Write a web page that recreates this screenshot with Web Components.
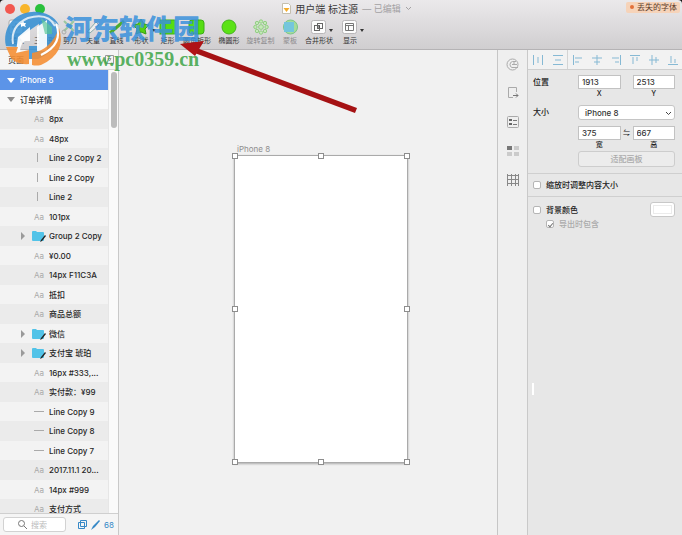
<!DOCTYPE html>
<html lang="zh-CN">
<head>
<meta charset="utf-8">
<title>用户端 标注源</title>
<style>
html,body{height:100%;margin:0}
body{font:8px/12px Inter,"Noto Sans CJK SC",sans-serif;color:#222;background:#111;overflow:hidden}
</style>
</head>
<body>
<sk-app></sk-app>
<script>
function define(name, html, setup) {
  customElements.define(name, class extends HTMLElement {
    constructor() {
      super();
      const t = document.createElement('template');
      t.innerHTML = '<style>*{box-sizing:border-box}</style>' + html;
      this.attachShadow({mode: 'open'}).append(t.content.cloneNode(true));
    }
    connectedCallback() { if (setup) setup(this, this.shadowRoot); }
  });
}

const toolIcons = {
  plus: '<svg width="20" height="18"><rect x="2" y="2" width="14" height="14" rx="2" fill="#fafafa" stroke="#aaa"/><path d="M9 5v8M5 9h8" stroke="#777"/></svg>',
  tri: '<svg width="20" height="18"><path d="M10 2l8 14H2z" fill="#7ed24a" opacity=".8"/></svg>',
  cut: '<svg width="20" height="18"><path d="M4 3l10 10M14 3L4 13" stroke="#9bc7a0" stroke-width="2"/><circle cx="4" cy="14" r="2" fill="none" stroke="#aaa"/></svg>',
  pen: '<svg width="20" height="18"><path d="M4 14L13 4l3 3L7 15z" fill="#eee" stroke="#8aa"/></svg>',
  line: '<svg width="20" height="18"><path d="M3 15L17 3" stroke="#4dac2c" stroke-width="3"/></svg>',
  shape: '<svg width="20" height="18"><path d="M9 1l3 5 5 1-4 4 1 5-5-2-5 2 1-5-4-4 5-1z" fill="#54d112" stroke="#369d12"/></svg>',
  rect: '<svg width="20" height="18"><rect x="2" y="2" width="15" height="14" fill="#56dd12" stroke="#3bae16"/></svg>',
  round: '<svg width="20" height="18"><rect x="2" y="2" width="15" height="14" rx="3" fill="#56dd12" stroke="#3bae16"/></svg>',
  oval: '<svg width="20" height="18"><circle cx="10" cy="9" r="7" fill="#5be216" stroke="#43b41f"/></svg>',
  rotate: '<svg width="20" height="18"><g fill="#c5e9b9" stroke="#84c974" stroke-width=".8"><circle cx="10" cy="3.5" r="1.7"/><circle cx="14" cy="5" r="1.7"/><circle cx="15.6" cy="9" r="1.7"/><circle cx="14" cy="13" r="1.7"/><circle cx="10" cy="14.6" r="1.7"/><circle cx="6" cy="13" r="1.7"/><circle cx="4.4" cy="9" r="1.7"/><circle cx="6" cy="5" r="1.7"/><circle cx="10" cy="9" r="2.4"/></g></svg>',
  mask: '<svg width="20" height="18"><circle cx="10.500" cy="9" r="7" fill="#a4dc9a" stroke="#7bc588"/><rect x="4" y="4" width="10" height="10" fill="#74c6dc"/></svg>',
  merge: '<svg width="20" height="18"><rect x="2.500" y="2.500" width="14" height="13" rx="2" fill="#fcfcfc" stroke="#b8b6b8"/><rect x="5.500" y="7.500" width="5" height="5" fill="none" stroke="#666"/><rect x="8.500" y="5.500" width="5" height="5" fill="none" stroke="#666"/><path d="M9 9h2" stroke="#333"/></svg>',
  view: '<svg width="20" height="18"><rect x="2.500" y="2.500" width="14" height="13" rx="2" fill="#fcfcfc" stroke="#b8b6b8"/><path d="M5.500 5.500h8v7h-8zM5.500 7.500h8M8.500 7.500v5" fill="none" stroke="#777"/></svg>'
};

define('sk-tool', `<style>
:host{display:block;flex:none}
button{all:unset;width:100%;display:flex;flex-direction:column;align-items:center;font-size:7px;line-height:10px;white-space:nowrap;color:#333}
:host([dim]) button{color:#8c8a8c}
i{position:relative;height:18px}
:host([menu]) i::after{content:"";position:absolute;left:100%;top:11px;border:2px solid transparent;border-top:3px solid #333;border-bottom:0}
svg{display:block}
</style><button><i></i><span><slot></slot></span></button>`, (el, r) => {
  el.style.width = el.getAttribute('w') + 'px';
  r.querySelector('i').innerHTML = toolIcons[el.getAttribute('icon')];
});

define('sk-toolbar', `<style>
:host{display:grid;grid-template-rows:17px 1fr;height:50px;background:linear-gradient(#ebe9eb,#d0ced0);border-bottom:1px solid #b5b3b5;border-radius:4px 4px 0 0;position:relative}
.title{display:grid;grid-template-columns:1fr auto 1fr;align-items:center}
.lights{display:flex;gap:5px;padding-left:5px}
.lights button{all:unset;width:10px;height:10px;border-radius:50%;background:#f25850}
.lights button:nth-child(2){background:#f8b52b}.lights button:nth-child(3){background:#29c03c}
.doc{display:flex;align-items:center;gap:4px;font-size:10px;color:#3a393a;padding-left:12px;white-space:nowrap}
.doc small{font-size:9px;color:#a3a1a3}
.font{justify-self:end;background:#f6d3b9;border-radius:2px;padding:0 3px 0 2px;margin:-3px 2px 0 0;line-height:11px;color:#5c3b2a;display:flex;align-items:center;gap:3px}
.font::before{content:"";width:4px;height:4px;border-radius:50%;background:#e2703a;margin-left:2px}
.tools{display:flex;padding:1px 0 0 4px}
</style>
<div class="title"><div class="lights"><button aria-label="关闭"></button><button aria-label="最小化"></button><button aria-label="缩放"></button></div>
<div class="doc"><svg width="9" height="11"><path d="M.5.5h6l2 2v8h-8z" fill="#fff" stroke="#c5bfae"/><path d="M1.500 5h6l-3 4z" fill="#f4ac2c"/></svg><span>用户端 标注源</span><small>— 已编辑</small><svg width="7" height="5"><path d="M1 1l2.500 2.500L6 1" fill="none" stroke="#a3a1a3"/></svg></div>
<span class="font">丢失的字体</span></div>
<div class="tools">
<sk-tool w="26" icon="plus">插入</sk-tool><sk-tool w="29" icon="tri">三角形</sk-tool><sk-tool w="22" icon="cut">剪刀</sk-tool><sk-tool w="24" icon="pen">矢量</sk-tool><sk-tool w="23" icon="line">直线</sk-tool><sk-tool w="27" icon="shape" menu>形状</sk-tool><sk-tool w="25" icon="rect">矩形</sk-tool><sk-tool w="34" icon="round">圆角矩形</sk-tool><sk-tool w="30" icon="oval">椭圆形</sk-tool><sk-tool w="33" icon="rotate" dim>旋转复制</sk-tool><sk-tool w="26" icon="mask" dim>蒙板</sk-tool><sk-tool w="32" icon="merge" menu>合并形状</sk-tool><sk-tool w="30" icon="view" menu>显示</sk-tool></div>`);

define('sk-layer', `<style>
:host{display:grid;grid-template-columns:12px 16px 1fr;align-items:center;column-gap:2px;padding-left:17px;flex:none;height:20px;background:#f3f3f3;white-space:nowrap;font-weight:500;color:#262626}
:host(:nth-child(even)){height:19px}
:host(:nth-child(odd)){background:#ebebeb}
:host([kind=board]),:host([kind=root]){grid-template-columns:12px 1fr;padding-left:6px}
:host([kind=board]){background:#5c94e8;color:#fff}
:host([kind=root]){background:#f9f9f9}
:host([kind=board]) .ic,:host([kind=root]) .ic{display:none}
.ic{color:#a9a9a9;text-align:center;font-weight:400;height:12px}
svg{display:block;margin:auto}
.name{overflow:hidden;text-overflow:ellipsis}
.tw svg{margin:0 0 0 1px}
</style><span class="tw"></span><span class="ic"></span><span class="name"><slot></slot></span>`, (el, r) => {
  const k = el.getAttribute('kind'), tw = r.querySelector('.tw'), ic = r.querySelector('.ic');
  if (k === 'board' || k === 'root') tw.innerHTML = `<svg width="8" height="5"><path d="M0 0h8L4 5z" fill="${k === 'board' ? '#fff' : '#8b8b8b'}"/></svg>`;
  if (k === 'group') {
    tw.innerHTML = '<svg width="8" height="8"><path d="M3 0l4 4-4 4z" fill="#9a9a9a"/></svg>';
    ic.innerHTML = '<svg width="16" height="12"><path d="M1 2q0-1 1-1h3l1 1h6q1 0 1 1v7q0 1-1 1H2q-1 0-1-1z" fill="#52c3e8"/><path d="M9 12l1-2 4-5 1 1-4 5z" fill="#222"/></svg>';
  } else if (k === 'v') ic.innerHTML = '<svg width="16" height="12"><path d="M6.500 1v9" stroke="#aaa"/></svg>';
  else if (k === 'h') ic.innerHTML = '<svg width="16" height="12"><path d="M3 5.500h10" stroke="#aaa"/></svg>';
  else if (k === 'text') ic.textContent = 'Aa';
});

define('sk-layers', `<style>
:host{display:grid;grid-template-rows:20px minmax(0,1fr) 22px;background:#f5f5f5;border-right:1px solid #c9c9c9;min-height:0}
header{display:flex;align-items:center;justify-content:space-between;padding:0 4px 0 8px;border-bottom:1px solid #d5d5d5}
.body{display:grid;grid-template-columns:1fr 10px;min-height:0;overflow:hidden}
.list{display:flex;flex-direction:column;overflow:hidden;min-width:0}
.bar{background:#fafafa;border-left:1px solid #e6e6e6;padding:2px 1px 0 2px}
.bar::before{content:"";display:block;width:6px;height:56px;border-radius:3px;background:#bcbcbc}
footer{display:flex;align-items:center;gap:4px;padding:0 4px 0 3px;border-top:1px solid #cfcfcf;color:#3689c7}
label{flex:1;display:flex;align-items:center;gap:4px;height:15px;min-width:0;background:#fff;border:1px solid #d2d2d2;border-radius:3px;padding-left:14px;margin-right:8px}
input{all:unset;width:20px;flex:1;min-width:0;font-size:8px}
input::placeholder{color:#bbb}
</style>
<header><span>页面</span><svg width="9" height="9"><path d="M.5.5h8v8h-8zM3 3.500h3L4.500 6z" fill="none" stroke="#999"/></svg></header>
<div class="body"><div class="list">
<sk-layer kind="board">iPhone 8</sk-layer><sk-layer kind="root">订单详情</sk-layer>
<sk-layer kind="text">8px</sk-layer><sk-layer kind="text">48px</sk-layer>
<sk-layer kind="v">Line 2 Copy 2</sk-layer><sk-layer kind="v">Line 2 Copy</sk-layer><sk-layer kind="v">Line 2</sk-layer>
<sk-layer kind="text">101px</sk-layer><sk-layer kind="group">Group 2 Copy</sk-layer><sk-layer kind="text">¥0.00</sk-layer><sk-layer kind="text">14px F11C3A</sk-layer><sk-layer kind="text">抵扣</sk-layer><sk-layer kind="text">商品总额</sk-layer><sk-layer kind="group">微信</sk-layer><sk-layer kind="group">支付宝 琥珀</sk-layer><sk-layer kind="text">16px #333,...</sk-layer><sk-layer kind="text">实付款：¥99</sk-layer><sk-layer kind="h">Line Copy 9</sk-layer><sk-layer kind="h">Line Copy 8</sk-layer><sk-layer kind="h">Line Copy 7</sk-layer><sk-layer kind="text">2017.11.1 20...</sk-layer><sk-layer kind="text">14px #999</sk-layer><sk-layer kind="text">支付方式</sk-layer>
</div><div class="bar"></div></div>
<footer><label><svg width="9" height="9"><circle cx="3.500" cy="3.500" r="3" fill="none" stroke="#777"/><path d="M6 6l3 3" stroke="#777"/></svg><input placeholder="搜索" aria-label="搜索"></label><svg width="9" height="9"><path d="M2.500.5h6v6h-6zM.5 2.500h6v6h-6z" fill="none" stroke="#3689c7"/></svg><svg width="9" height="10"><path d="M0 10l2-4 6-6 1 1-5 6z" fill="#3689c7"/></svg><span>68</span></footer>`);

define('sk-canvas', `<style>
:host{display:block;position:relative;background:#f1f1f1;overflow:hidden}
.name{position:absolute;left:118px;top:93px;color:#8e8e8e}
.board{position:absolute;left:115px;top:105px;width:174px;height:308px;background:#fff;border:1px solid #aaa;box-shadow:0 1px 2px #aaa}
.board i{position:absolute;width:6px;height:6px;background:#fff;border:1px solid #8d8d8d;transform:translate(-50%,-50%)}
</style><span class="name">iPhone 8</span><div class="board"></div>`, (el, r) => {
  for (const [x, y] of [[0,0],[50,0],[100,0],[0,50],[100,50],[0,100],[50,100],[100,100]]) {
    const h = document.createElement('i');
    h.style.left = x + '%'; h.style.top = y + '%';
    r.querySelector('.board').append(h);
  }
});

define('sk-strip', `<style>
:host{display:flex;flex-direction:column;gap:1px;background:#efefef;border-left:1px solid #c6c6c6;border-right:1px solid #c9c9c9}
button{all:unset;height:28px;display:grid;place-items:center}
button:first-child{height:19px;border-bottom:1px solid #d0d0d0;background:#f5f5f5}
svg{display:block;fill:none;stroke:#aaa}
</style>
<button aria-label="组件"><svg width="13" height="13"><circle cx="6.500" cy="6.500" r="5.500"/><path d="M10 3.500H6.500Q4 4 4 6.500T6 9.500h6M6 6.500h5M8 4v2"/></svg></button>
<button aria-label="导出"><svg width="14" height="14"><path d="M10.500 6V1.500h-8v10H7"/><path d="M7 9.500h5M10 7.500l2 2-2 2" style="stroke:#777"/></svg></button>
<button aria-label="列表"><svg width="14" height="14"><rect x="1.500" y="1.500" width="11" height="11" rx="1"/><path d="M3 5h3M3 9h3" style="stroke:#666;stroke-width:2"/><path d="M7 5.500h4M7 9.500h4" style="stroke:#777"/></svg></button>
<button aria-label="符号"><svg width="14" height="14" style="stroke:none"><path d="M1 2h5v4H1z" fill="#777"/><path d="M8 2h5v4H8zM1 8h5v4H1zM8 8h5v4H8z" fill="#cbcbcb"/></svg></button>
<button aria-label="网格"><svg width="14" height="14" style="stroke:#888"><path d="M1.500 1v12M5.500 1v12M9.500 1v12M12.500 1v12M1 2.500h12M1 6.500h12M1 10.500h12"/></svg></button>`);

const aligns = ['M.5 0v10M9.500 0v10M5 2v6', 'M0 .5h10M0 9.500h10M2 5h6', 'M.5 0v10M2 3h7M2 7h4', 'M0 3h10M2 7h6M5 0v10', 'M9.500 0v10M1 3h7M4 7h4', 'M0 .5h10M3 2v7M7 2v4', 'M0 5h10M3 0v10M7 2v6', 'M0 9.500h10M3 1v7M7 4v4'];

define('sk-inspector', `<style>
:host{display:flex;flex-direction:column;background:#e7e7e7;position:relative;min-width:0}
nav{display:grid;grid-template-columns:20px 20px repeat(6,1fr);height:20px;border-bottom:1px solid #cfcfcf;background:#f2f2f2;flex:none}
nav button{all:unset;display:grid;place-items:center}
nav button:nth-child(2){border-right:1px solid #d4d4d4}
nav svg{fill:none;stroke:#86b9d4;display:block}
.geo{display:grid;grid-template-columns:45px 1fr 12px 1fr;padding:5px 7px 6px 5px;border-bottom:1px solid #cfcfcf;align-items:center;font-weight:500}
input[type=text]{width:100%;min-width:0;height:14px;border:1px solid #c2c2c2;background:#fff;font:inherit;color:#333;padding:0 3px;border-radius:0}
label.cap{text-align:center;font-size:7px;line-height:9px}
.wide{grid-column:2/5}
.sel{position:relative;margin:7px 0 6px}
select{appearance:none;display:block;width:100%;height:15px;font:inherit;color:#333;background:#fff;border:1px solid #c5c5c5;border-radius:3px;padding:0 6px}
.sel svg{position:absolute;right:3px;top:6px;fill:none;stroke:#444}
.fit{height:16px;border:1px solid #cdcdcd;border-radius:3px;background:#ececec;color:#aaa;font:inherit;padding:0;margin-top:2px}
.mid{text-align:center;font-size:7px}
.row{display:flex;align-items:center;gap:5px;font-weight:500}
.a{height:23px;padding-left:5px;border-bottom:1px solid #cfcfcf}
.b{padding:5px 7px 0 5px;height:20px}
.c{padding-left:18px;color:#aaa;height:14px}
input[type=checkbox]{appearance:none;margin:0;width:8px;height:8px;border:1px solid #b5b5b5;border-radius:2px;background:#fff;display:grid;place-items:center}
input[type=checkbox]:checked::after{content:"";width:2px;height:4px;border:solid #777;border-width:0 1px 1px 0;transform:rotate(40deg)}
.row label{display:flex;gap:5px;align-items:center}
.sw{all:unset;box-sizing:border-box;margin-left:auto;width:25px;height:15px;border:1px solid #c8c8c8;border-radius:3px;background:#fff;padding:2px}
.sw::before{content:"";display:block;height:100%;box-sizing:border-box;border:1px solid #ebebeb}
.mark{position:absolute;left:4px;top:333px;width:2px;height:12px;background:#fff}
</style>
<nav></nav>
<div class="geo">
<span>位置</span><input type="text" id="x" value="1913"><span></span><input type="text" id="y" value="2513">
<span></span><label class="cap" for="x">X</label><span></span><label class="cap" for="y">Y</label>
<label for="size">大小</label><div class="wide sel"><select id="size"><option>iPhone 8</option></select><svg width="7" height="5"><path d="M1 1l2.500 2.500L6 1"/></svg></div>
<span></span><input type="text" id="w" value="375"><span class="mid">⇋</span><input type="text" id="h" value="667">
<span></span><label class="cap" for="w">宽</label><span></span><label class="cap" for="h">高</label>
<span></span><button class="wide fit" disabled>适配画板</button></div>
<div class="row a"><label><input type="checkbox">缩放时调整内容大小</label></div>
<div class="row b"><label><input type="checkbox">背景颜色</label><button class="sw" aria-label="颜色"></button></div>
<div class="row c"><label><input type="checkbox" checked disabled>导出时包含</label></div>
<div class="mark"></div>`, (el, r) => {
  r.querySelector('nav').innerHTML = aligns.map(d => `<button aria-label="对齐"><svg width="10" height="10"><path d="${d}"/></svg></button>`).join('');
});

define('sk-watermark', `<style>
:host{position:absolute;inset:0;pointer-events:none}
svg{position:absolute;left:0;top:0}
b,span{position:absolute;white-space:nowrap}
b{left:65px;top:16px;font:900 27px/24px "Noto Sans CJK SC",sans-serif;color:#3a91dcdd}
span{top:48px;left:67px;font:bold 20px/22px "Liberation Serif",serif;color:#3da447dd}
</style>
<svg width="364" height="120">
<path d="M6 46C2 28 14 13 32 12c12-1 22 4 27 13-5-4-9-6-13-6L20 37v10z" fill="#3590d3" opacity=".88"/>
<path d="M46 19c7 1 11 4 12 10 2 14-7 25-20 30H29V46h10V22z" fill="#3590d3" opacity=".85"/>
<path d="M13 44q-3-18 15-26 20-6 27 8" fill="none" stroke="#d7e8f4" stroke-width="2"/>
<path d="M18 37l12-10v14h-5q-5 3-5 11h-4z" fill="#fff" opacity=".92"/>
<path d="M37 27l10-7v31H37z" fill="#fff" opacity=".92"/>
<path d="M41 18l11 9v7h-7z" fill="#5cc79a" opacity=".7"/>
<path d="M6 47h12l-2 6 13-3v14q-12 1-18-6z" fill="#f58d31" opacity=".88"/>
<path d="M59 28q8 25-18 37-5 1-9 0V53q19-3 27-25z" fill="#f58d31" opacity=".88"/>
<path d="M56 24q8 20-15 31" fill="none" stroke="#fff" stroke-width="2"/>
<path d="M23 21l1 2h2l-1 2 1 2-3-1-2 1v-2l-1-2h2z" fill="#fff"/>
<path d="M194 47L357 108l-2 5L192 52z" fill="#a51214"/><path d="M180 44l24-3-9 15z" fill="#b01316"/>
</svg><b>河东软件园</b><span>www.pc0359.cn</span>`);

define('sk-app', `<style>
:host{display:grid;grid-template-rows:50px minmax(0,1fr);height:100vh;position:relative}
main{display:grid;grid-template-columns:119px minmax(0,1fr) 31px 154px;min-height:0}
</style><sk-toolbar></sk-toolbar><main><sk-layers></sk-layers><sk-canvas></sk-canvas><sk-strip></sk-strip><sk-inspector></sk-inspector></main><sk-watermark></sk-watermark>`);
</script>
</body>
</html>
